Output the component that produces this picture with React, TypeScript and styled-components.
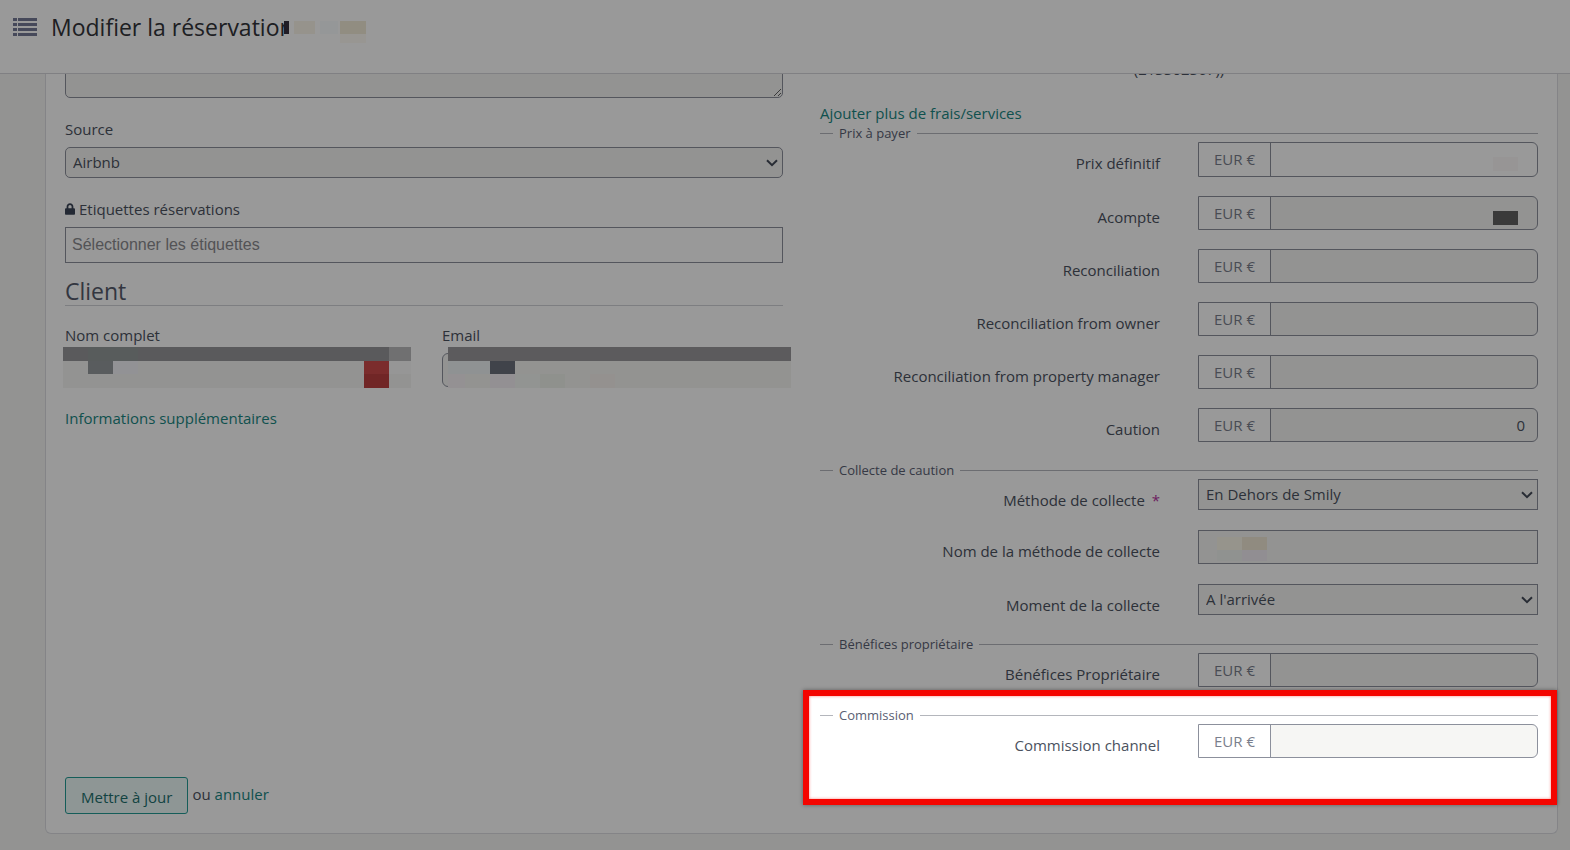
import React from "react";
import styled, { createGlobalStyle } from "styled-components";
import { FaLock } from "react-icons/fa";

const GlobalStyle = createGlobalStyle`
	* {
		box-sizing: border-box;
	}

	body {
		margin: 0;
		background: #f6f6f3;
		color: #4b5260;
		font-family: "Open Sans", "Noto Sans", sans-serif;
		font-size: 15px;
		line-height: 24px;
	}
`;

const PageDiv = styled.div`
	min-height: 100vh;
	overflow: hidden;
`;

const HeaderStyled = styled.header`
	position: relative;
	z-index: 1;
	display: flex;
	align-items: flex-start;
	height: 74px;
	padding: 12px 13px;
	background: #fff;
	border-bottom: 1px solid #d5d6da;
`;

const ListSvg = styled.svg`
	width: 24px;
	height: 18px;
	margin: 6px 14px 0 0;
	fill: #767b96;
`;

const TitleH1 = styled.h1`
	position: relative;
	margin: 0;
	color: #33343a;
	font-size: 23px;
	font-weight: 400;
	line-height: 30px;
`;

const CardMain = styled.main`
	margin: 0 12px 16px 45px;
	padding: 0 19px 19px;
	background: #fff;
	border: 1px solid #dcdde2;
	border-top: 0;
	border-radius: 0 0 6px 6px;
`;

const ColumnsDiv = styled.div`
	display: grid;
	grid-template-columns: 1fr 1fr;
	gap: 37px;
`;

const ColumnDiv = styled.div`
	min-width: 0;
`;

const FieldDiv = styled.div`
	display: flex;
	flex-direction: column;
	margin-bottom: 19px;
`;

const FieldLabel = styled.label`
	display: flex;
	align-items: center;
	gap: 4px;
	margin-bottom: 6px;

	svg {
		width: 10px;
		height: 12px;
		color: #3b4558;
	}
`;

const ControlInput = styled.input<{ $tags?: boolean }>`
	width: 100%;
	min-width: 0;
	height: ${(p) => (p.$tags ? "36px" : "34px")};
	padding: 0 6px;
	background: ${(p) => (p.$tags ? "#fff" : "#f6f6f4")};
	border: 1px solid #8c909c;
	border-radius: 0;
	color: inherit;
	font: inherit;

	${(p) =>
		p.$tags &&
		`
		font-family: "Liberation Sans", Arial, sans-serif;
		font-size: 16px;
	`}

	&::placeholder {
		color: #8b8b8f;
		opacity: 1;
	}
`;

const RoundedInput = styled(ControlInput)`
	border-radius: 6px;
`;

const SelectDiv = styled.div`
	position: relative;
`;

const ControlSelect = styled.select<{ $rounded?: boolean }>`
	display: block;
	width: 100%;
	height: 31px;
	padding: 0 24px 1px 7px;
	background: #f6f6f4;
	border: 1px solid #8c909c;
	border-radius: ${(p) => (p.$rounded ? "5px" : "0")};
	color: inherit;
	font: inherit;
	appearance: none;
`;

const ChevronSvg = styled.svg`
	position: absolute;
	top: 12px;
	right: 5px;
	width: 12px;
	height: 8px;
	fill: none;
	stroke: #434a58;
	stroke-width: 2;
	pointer-events: none;
`;

const NoteTextarea = styled.textarea`
	display: block;
	width: 100%;
	height: 60px;
	margin: -36px 0 19px;
	background: #f6f6f4;
	border: 1px solid #8c909c;
	border-radius: 5px;
	font: inherit;
	resize: vertical;
`;

const SectionH2 = styled.h2`
	margin: -5px 0 17px;
	border-bottom: 1px solid #d0d2d8;
	color: #555a6b;
	font-size: 23px;
	font-weight: 400;
	line-height: 28px;
`;

const ClientDiv = styled.div`
	display: grid;
	grid-template-columns: 1fr 1fr;
	gap: 36px;
`;

const CoverDiv = styled.div`
	position: relative;
`;

const MosaicSvg = styled.svg<{
	$top: number;
	$left: number;
	$right: number;
	$height: number;
}>`
	position: absolute;
	top: ${(p) => p.$top}px;
	left: ${(p) => p.$left}px;
	width: calc(100% - ${(p) => p.$left + p.$right}px);
	height: ${(p) => p.$height}px;
	shape-rendering: crispEdges;
	pointer-events: none;
`;

const LinkA = styled.a`
	color: #1a8783;
	text-decoration: none;
`;

const ServiceP = styled.p`
	margin: -17px 0 22px;
	text-align: center;
`;

const AddP = styled.p`
	margin: 0;
	line-height: 21px;
`;

const GroupFieldset = styled.fieldset`
	min-width: 0;
	margin: 0;
	padding: 0;
	border: 0;
	border-top: 1px solid #b4b6bc;
`;

const GroupLegend = styled.legend`
	margin-left: 13px;
	padding: 0 6px;
	color: #5a6073;
	font-size: 13px;
	line-height: 18px;
`;

const RowDiv = styled.div`
	display: grid;
	grid-template-columns: minmax(0, 1fr) 340px;
	column-gap: 38px;
	align-items: start;
	margin-bottom: 19px;
`;

const CollectRowDiv = styled(RowDiv)`
	margin-bottom: 20px;
`;

const RowLabel = styled.label`
	height: 31px;
	padding-top: 9px;
	text-align: right;
`;

const RequiredSpan = styled.span`
	margin-left: 3px;
	color: #b5359f;
`;

const MoneyDiv = styled.div<{ $editable?: boolean }>`
	position: relative;
	display: flex;
	height: ${(p) => (p.$editable ? "35px" : "34px")};
	background: ${(p) => (p.$editable ? "#fff" : "#f6f6f4")};
	border: 1px solid #8c909c;
	border-radius: 0 6px 6px 0;
`;

const CurrencySpan = styled.span`
	display: flex;
	flex: 0 0 72px;
	align-items: center;
	justify-content: center;
	padding-bottom: 1px;
	background: #fff;
	border-right: 1px solid #8c909c;
	color: #7a7f8d;
`;

const MoneyInput = styled.input`
	flex: 1;
	min-width: 0;
	padding: 0 12px;
	background: transparent;
	border: 0;
	color: inherit;
	font: inherit;
	text-align: right;
`;

const AmountSvg = styled.svg`
	position: absolute;
	top: 14px;
	right: 19px;
	width: 25px;
	height: 14px;
`;

const SpotlightDiv = styled.div`
	position: relative;
`;

// red frame that dims everything outside of it
const FrameDiv = styled.div`
	position: absolute;
	z-index: 2;
	inset: -16px -19px -28px -17px;
	border: 6px solid #f40500;
	box-shadow:
		0 0 0 3000px rgba(0, 0, 0, 0.4),
		0 0 4px rgba(0, 0, 0, 0.4),
		inset 0 0 3px rgba(244, 5, 0, 0.5);
	pointer-events: none;
`;

const ActionsDiv = styled.div`
	display: flex;
	align-items: center;
	gap: 4px;
`;

const SubmitButton = styled.button`
	height: 37px;
	padding: 2px 15px 0;
	background: #edfaf9;
	border: 1px solid #249c95;
	border-radius: 3px;
	color: #1d716e;
	font: inherit;
`;

const OrSpan = styled.span`
	padding-bottom: 3px;
`;

interface BlockItem {
	x: number;
	y: number;
	w: number;
	h: number;
	color: string;
}

const titleBlocks: BlockItem[] = [
	{ x: 0, y: 0, w: 5, h: 13, color: "#36303f" },
	{ x: 5, y: 0, w: 80, h: 22, color: "#fff" },
	{ x: 10, y: 0, w: 20, h: 13, color: "#faf5ea" },
	{ x: 35, y: 0, w: 18, h: 13, color: "#f8fcfd" },
	{ x: 55, y: 0, w: 25, h: 13, color: "#f2ebd7" },
	{ x: 55, y: 13, w: 25, h: 9, color: "#fdfbf3" },
];

const nameBlocks: BlockItem[] = [
	{ x: 0, y: 0, w: 348, h: 41, color: "#f6f6f3" },
	{ x: 0, y: 0, w: 326, h: 14, color: "#96979a" },
	{ x: 25, y: 0, w: 50, h: 14, color: "#939a9a" },
	{ x: 326, y: 0, w: 22, h: 14, color: "#bbbbbd" },
	{ x: 25, y: 14, w: 25, h: 13, color: "#949a9d" },
	{ x: 50, y: 14, w: 25, h: 13, color: "#f4f4f8" },
	{ x: 301, y: 14, w: 25, h: 13, color: "#cd4a4a" },
	{ x: 301, y: 27, w: 25, h: 14, color: "#bd4040" },
	{ x: 326, y: 14, w: 22, h: 13, color: "#fafafa" },
];

const emailBlocks: BlockItem[] = [
	{ x: 0, y: 0, w: 343, h: 41, color: "#f6f6f2" },
	{ x: 0, y: 0, w: 343, h: 14, color: "#99989c" },
	{ x: 0, y: 14, w: 42, h: 13, color: "#eff4f6" },
	{ x: 42, y: 14, w: 25, h: 13, color: "#6b717c" },
	{ x: 0, y: 27, w: 17, h: 14, color: "#f7f2f5" },
	{ x: 42, y: 27, w: 25, h: 14, color: "#f6f0f6" },
	{ x: 67, y: 27, w: 25, h: 14, color: "#f3f7f3" },
	{ x: 92, y: 27, w: 25, h: 14, color: "#eff2ec" },
	{ x: 142, y: 27, w: 25, h: 14, color: "#f7f2ee" },
];

const methodBlocks: BlockItem[] = [
	{ x: 0, y: 0, w: 25, h: 13, color: "#fbf7ea" },
	{ x: 25, y: 0, w: 25, h: 13, color: "#f0e8d5" },
	{ x: 0, y: 13, w: 25, h: 11, color: "#f0f3f1" },
	{ x: 25, y: 13, w: 25, h: 11, color: "#f2edf4" },
];

interface MosaicProps {
	blocks: BlockItem[];
	width: number;
	height: number;
	top: number;
	left: number;
	right: number;
}

const Mosaic = (props: MosaicProps) => (
	<MosaicSvg
		$top={props.top}
		$left={props.left}
		$right={props.right}
		$height={props.height}
		viewBox={`0 0 ${props.width} ${props.height}`}
		preserveAspectRatio="none"
		aria-hidden="true"
	>
		{props.blocks.map((b, i) => (
			<rect key={i} x={b.x} y={b.y} width={b.w} height={b.h} fill={b.color} />
		))}
	</MosaicSvg>
);

interface SelectProps {
	id: string;
	option: string;
	rounded?: boolean;
}

const Select = (props: SelectProps) => (
	<SelectDiv>
		<ControlSelect id={props.id} $rounded={props.rounded}>
			<option>{props.option}</option>
		</ControlSelect>
		<ChevronSvg viewBox="0 0 12 8" aria-hidden="true">
			<path d="M1 1.2L6 6.2L11 1.2" />
		</ChevronSvg>
	</SelectDiv>
);

interface MoneyRowProps {
	id: string;
	label: string;
	value?: string;
	editable?: boolean;
	cover?: string;
}

const MoneyRow = (props: MoneyRowProps) => (
	<RowDiv>
		<RowLabel htmlFor={props.id}>{props.label}</RowLabel>
		<MoneyDiv $editable={props.editable}>
			<CurrencySpan>EUR €</CurrencySpan>
			<MoneyInput id={props.id} defaultValue={props.value} />
			{props.cover && (
				<AmountSvg aria-hidden="true">
					<rect width="25" height="14" fill={props.cover} />
				</AmountSvg>
			)}
		</MoneyDiv>
	</RowDiv>
);

const App = () => {
	return (
		<PageDiv>
			<GlobalStyle />
			<HeaderStyled>
				<ListSvg viewBox="0 0 24 18" aria-hidden="true">
					{[0, 5, 10, 15].map((y) => (
						<g key={y}>
							<rect x="0" y={y} width="4" height="3" />
							<rect x="5" y={y} width="19" height="3" />
						</g>
					))}
				</ListSvg>
				<TitleH1>
					Modifier la réservation
					<Mosaic
						blocks={titleBlocks}
						width={85}
						height={22}
						top={9}
						left={233}
						right={-77}
					/>
				</TitleH1>
			</HeaderStyled>
			<CardMain>
				<form onSubmit={(e) => e.preventDefault()}>
					<ColumnsDiv>
						<ColumnDiv>
							<NoteTextarea aria-label="Notes" />
							<FieldDiv>
								<FieldLabel htmlFor="source">Source</FieldLabel>
								<Select id="source" option="Airbnb" rounded />
							</FieldDiv>
							<FieldDiv>
								<FieldLabel htmlFor="tags">
									<FaLock />
									Etiquettes réservations
								</FieldLabel>
								<ControlInput
									id="tags"
									$tags
									placeholder="Sélectionner les étiquettes"
								/>
							</FieldDiv>
							<SectionH2>Client</SectionH2>
							<ClientDiv>
								<FieldDiv>
									<FieldLabel htmlFor="name">Nom complet</FieldLabel>
									<CoverDiv>
										<RoundedInput id="name" />
										<Mosaic
											blocks={nameBlocks}
											width={348}
											height={41}
											top={-6}
											left={-2}
											right={-5}
										/>
									</CoverDiv>
								</FieldDiv>
								<FieldDiv>
									<FieldLabel htmlFor="email">Email</FieldLabel>
									<CoverDiv>
										<RoundedInput id="email" type="email" />
										<Mosaic
											blocks={emailBlocks}
											width={343}
											height={41}
											top={-6}
											left={6}
											right={-8}
										/>
									</CoverDiv>
								</FieldDiv>
							</ClientDiv>
							<LinkA href="#infos">Informations supplémentaires</LinkA>
						</ColumnDiv>
						<ColumnDiv>
							<ServiceP>(213302367))</ServiceP>
							<AddP>
								<LinkA href="#frais">Ajouter plus de frais/services</LinkA>
							</AddP>
							<GroupFieldset>
								<GroupLegend>Prix à payer</GroupLegend>
								<MoneyRow
									id="final"
									label="Prix définitif"
									editable
									cover="#fcf8f8"
								/>
								<MoneyRow id="deposit" label="Acompte" cover="#626262" />
								<MoneyRow id="reconciliation" label="Reconciliation" />
								<MoneyRow id="owner" label="Reconciliation from owner" />
								<MoneyRow
									id="manager"
									label="Reconciliation from property manager"
								/>
								<MoneyRow id="caution" label="Caution" value="0" />
							</GroupFieldset>
							<GroupFieldset>
								<GroupLegend>Collecte de caution</GroupLegend>
								<CollectRowDiv>
									<RowLabel htmlFor="method">
										Méthode de collecte <RequiredSpan>*</RequiredSpan>
									</RowLabel>
									<Select id="method" option="En Dehors de Smily" />
								</CollectRowDiv>
								<CollectRowDiv>
									<RowLabel htmlFor="method-name">
										Nom de la méthode de collecte
									</RowLabel>
									<CoverDiv>
										<ControlInput id="method-name" />
										<Mosaic
											blocks={methodBlocks}
											width={50}
											height={24}
											top={7}
											left={19}
											right={271}
										/>
									</CoverDiv>
								</CollectRowDiv>
								<CollectRowDiv>
									<RowLabel htmlFor="moment">Moment de la collecte</RowLabel>
									<Select id="moment" option="A l'arrivée" />
								</CollectRowDiv>
							</GroupFieldset>
							<GroupFieldset>
								<GroupLegend>Bénéfices propriétaire</GroupLegend>
								<MoneyRow id="profit" label="Bénéfices Propriétaire" />
							</GroupFieldset>
							<SpotlightDiv>
								<GroupFieldset>
									<GroupLegend>Commission</GroupLegend>
									<MoneyRow id="channel" label="Commission channel" />
								</GroupFieldset>
								<FrameDiv />
							</SpotlightDiv>
						</ColumnDiv>
					</ColumnsDiv>
					<ActionsDiv>
						<SubmitButton type="submit">Mettre à jour</SubmitButton>
						<OrSpan>
							ou <LinkA href="#annuler">annuler</LinkA>
						</OrSpan>
					</ActionsDiv>
				</form>
			</CardMain>
		</PageDiv>
	);
};

export default App;
